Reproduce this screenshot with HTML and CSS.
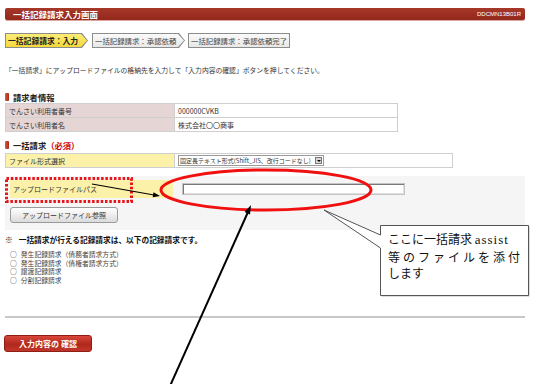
FILE: index.html
```html
<!DOCTYPE html>
<html lang="ja">
  <head>
    <meta charset="UTF-8" />
    <title>一括記録請求入力画面</title>
    <link rel="stylesheet" href="styles.css">
  </head>
  <body>
    <div class="page">
      <div class="titlebar">
        <h1>一括記録請求入力画面</h1>
        <span class="screen-code">DDCMN13B01R</span>
      </div>

      <div class="steps">
        <div class="step step-current"><span>一括記録請求：入力</span></div>
        <div class="step step-next"><span>一括記録請求：承認依頼</span></div>
        <div class="step step-last"><span>一括記録請求：承認依頼完了</span></div>
      </div>

      <p class="lead">「一括請求」にアップロードファイルの格納先を入力して「入力内容の確認」ボタンを押してください。</p>

      <h2 class="section-title"><i class="mark"></i>請求者情報</h2>
      <table class="info-table">
        <tr>
          <th class="label-pink">でんさい利用者番号</th>
          <td>000000CVKB</td>
        </tr>
        <tr>
          <th class="label-pink">でんさい利用者名</th>
          <td>株式会社〇〇商事</td>
        </tr>
      </table>

      <h2 class="section-title section-title-2"><i class="mark"></i>一括請求<span class="required">（必須）</span></h2>
      <table class="info-table wide">
        <tr>
          <th class="label-yellow">ファイル形式選択</th>
          <td>
            <div class="fake-select">
              <span>固定長テキスト形式(Shift_JIS、改行コードなし)</span>
              <b class="drop"></b>
            </div>
          </td>
        </tr>
      </table>

      <div class="upload-area">
        <div class="upload-row">
          <div class="upload-label">アップロードファイルパス</div>
          <div class="path-input"></div>
        </div>
        <button class="browse-btn">アップロードファイル参照</button>
      </div>

      <div class="note">
        <p class="note-title"><span class="kome">※</span>一括請求が行える記録請求は、以下の記録請求です。</p>
        <ul class="note-list">
          <li><span class="circle">○</span>発生記録請求（債務者請求方式）</li>
          <li><span class="circle">○</span>発生記録請求（債権者請求方式）</li>
          <li><span class="circle">○</span>譲渡記録請求</li>
          <li><span class="circle">○</span>分割記録請求</li>
        </ul>
      </div>

      <hr class="divider" />

      <button class="confirm-btn">入力内容の 確認</button>
    </div>

    <!-- annotations drawn over the screen -->
    <svg class="overlay" width="550" height="384" viewBox="0 0 550 384">
      <rect x="6.5" y="178.5" width="125" height="23" fill="none" stroke="#e8141a" stroke-width="3" stroke-dasharray="2.5 1.8" />
      <ellipse cx="266" cy="190" rx="105" ry="20" fill="none" stroke="#f01010" stroke-width="3" />
      <line x1="92" y1="184" x2="154" y2="195" stroke="#000" stroke-width="1.2" />
      <polygon points="160,196 153.5,192.3 152.7,197.3" fill="#000" />
      <line x1="170" y1="386" x2="248" y2="212" stroke="#000" stroke-width="2" />
      <polygon points="251,205 250,214.4 244.6,212" fill="#000" />
      <path d="M381.5 226.5 H529.5 V296.5 H381.5 Z" fill="#bbb" />
      <path d="M380.5 225.5 H528.5 V295.5 H380.5 V248 L324 210 L380.5 235 Z" fill="#fff" stroke="#555" stroke-width="1" />
    </svg>
    <div class="callout">
      <div class="callout-first">ここに一括請求 <span class="latin">assist</span></div>
      <div class="callout-line">等のファイルを添付</div>
      <div class="callout-last">します</div>
    </div>
  </body>
</html>
```

FILE: styles.css
```css
body {
  margin: 0;
  width: 550px;
  height: 384px;
  position: relative;
  overflow: hidden;
  background: #fff;
  font-family: "Noto Sans CJK JP", sans-serif;
  font-size: 7px;
  color: #333;
}

.page {
  width: 520px;
  margin-left: 5px;
  padding-top: 8px;
}

.titlebar {
  height: 12px;
  background: linear-gradient(#a6382a, #93271b);
  border-radius: 2px;
  box-shadow: 0 1px 0 #d9a8a0;
  display: flex;
  justify-content: space-between;
  align-items: center;
  padding: 0 4px 0 8px;
  color: #fff;
}

.titlebar h1 {
  margin: 0;
  font-size: 8.5px;
  font-weight: bold;
  line-height: 12px;
}

.screen-code {
  font-family: "Liberation Sans", sans-serif;
  font-size: 6px;
}

.steps {
  display: flex;
  margin-top: 13px;
  height: 15px;
}

.step {
  height: 15px;
  background: #8c8c8c;
  clip-path: polygon(0 0, calc(100% - 6px) 0, 100% 50%, calc(100% - 6px) 100%, 0 100%);
  display: flex;
}

.step span {
  flex: 1;
  margin: 1px;
  display: flex;
  align-items: center;
  padding-left: 2px;
  clip-path: polygon(0 0, calc(100% - 6px) 0, 100% 50%, calc(100% - 6px) 100%, 0 100%);
  white-space: nowrap;
  overflow: hidden;
}

.step-current {
  width: 83px;
}

.step-current span {
  background: linear-gradient(#fbec78, #f3d93a);
  font-size: 7.8px;
  font-weight: bold;
  color: #222;
}

.step-next {
  width: 93px;
  margin-left: 4px;
}

.step-next span,
.step-last span {
  background: linear-gradient(#fafafa, #e8e8e8);
  font-size: 7.4px;
  color: #444;
}

.step-last {
  width: 102px;
  margin-left: 3px;
  clip-path: none;
}

.step-last span {
  clip-path: none;
}

.lead {
  margin: 17px 0 0;
  line-height: 10px;
  font-size: 6.8px;
}

.section-title {
  margin: 17px 0 0;
  display: flex;
  align-items: center;
  font-size: 8.3px;
  font-weight: bold;
  line-height: 10px;
  color: #222;
}

.section-title-2 {
  margin-top: 8px;
}

.mark {
  width: 4px;
  height: 8px;
  margin-right: 4px;
  border-radius: 1px;
  background: linear-gradient(90deg, #e05a3c, #a3261a);
}

.required {
  color: #d20000;
}

.info-table {
  margin-top: 1px;
  width: 393px;
  border-collapse: collapse;
}

.info-table.wide {
  width: 448px;
  margin-top: 3px;
}

.info-table th,
.info-table td {
  border: 1px solid #cfcfcf;
  height: 13px;
  padding: 0 3px;
  font-weight: normal;
  text-align: left;
  line-height: 12px;
}

.info-table th {
  width: 162px;
}

.label-pink {
  background: #e6d5d5;
}

.label-yellow {
  background: #fcf1a8;
}

.fake-select {
  width: 144px;
  height: 9px;
  border: 1px solid #9a9a9a;
  display: flex;
  align-items: center;
  justify-content: space-between;
  font-size: 6px;
  line-height: 9px;
  white-space: nowrap;
}

.fake-select span {
  padding-left: 1px;
}

.drop {
  width: 7px;
  height: 7px;
  margin-right: 1px;
  background: #d8d8d8;
  border: 1px solid #777;
  box-sizing: border-box;
  position: relative;
}

.drop::after {
  content: "";
  position: absolute;
  left: 1px;
  top: 2px;
  border-left: 2px solid transparent;
  border-right: 2px solid transparent;
  border-top: 2px solid #000;
}

.upload-area {
  margin-top: 8px;
  background: #f5f5f5;
  padding: 4px 5px 7px;
}

.upload-row {
  display: flex;
  align-items: center;
  height: 18px;
}

.upload-label {
  width: 160px;
  height: 18px;
  padding-left: 3px;
  background: #fcf1a8;
  line-height: 18px;
  font-size: 7px;
}

.path-input {
  width: 221px;
  height: 10px;
  margin-left: 9px;
  background: #fff;
  border: 1px solid #c4c4c4;
  box-shadow: inset 1px 1px 0 #7a7a7a, inset -1px -1px 0 #e0e0e0;
}

.browse-btn {
  display: block;
  margin-top: 9px;
  width: 108px;
  height: 16px;
  padding: 0;
  border: 1px solid #9a9a9a;
  border-radius: 3px;
  background: linear-gradient(#ffffff, #dcdcdc);
  font-family: "Noto Sans CJK JP", sans-serif;
  font-size: 7px;
  color: #333;
}

.note {
  margin-top: 5px;
}

.note-title {
  margin: 0;
  line-height: 10px;
  font-size: 7.7px;
  font-weight: bold;
  color: #111;
}

.kome {
  margin-right: 6px;
}

.note-list {
  list-style: none;
  margin: 5px 0 0;
  padding: 0 0 0 5px;
}

.note-list li {
  line-height: 8.5px;
  font-size: 6.8px;
  color: #444;
}

.circle {
  margin-right: 4px;
  color: #222;
}

.divider {
  margin: 32px 0 0;
  border: none;
  height: 2px;
  background: #c8c8c8;
}

.confirm-btn {
  display: block;
  margin: 17px 0 0 -1px;
  width: 88px;
  height: 17px;
  padding: 0;
  border: 1px solid #8e1d14;
  border-radius: 3px;
  background: linear-gradient(#d9473a, #b0281d 55%, #c2362a);
  font-family: "Noto Sans CJK JP", sans-serif;
  font-size: 8px;
  font-weight: bold;
  color: #fff;
}

.overlay {
  position: absolute;
  top: 0;
  left: 0;
  pointer-events: none;
}

.callout {
  position: absolute;
  left: 388px;
  top: 231px;
  width: 132px;
  font-size: 12px;
  line-height: 16.5px;
  color: #111;
}

.callout-first {
  white-space: nowrap;
}

.callout-line {
  text-align: justify;
  text-align-last: justify;
  text-justify: inter-character;
}

.latin {
  font-family: "Liberation Serif", serif;
  font-size: 13px;
  letter-spacing: 1px;
}
```
